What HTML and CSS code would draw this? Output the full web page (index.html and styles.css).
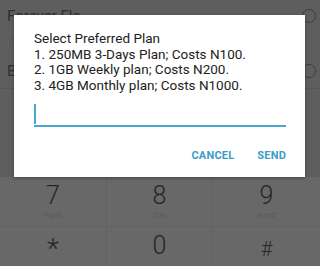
FILE: index.html
```html
<!DOCTYPE html>
<html>
<head>
<meta charset="utf-8">
<link rel="stylesheet" href="styles.css">
</head>
<body>
<div class="screen">
  <div class="top">
    <div class="row r1"><span class="name">Forever Flo</span><span class="ring"></span></div>
    <div class="row r2"><span class="ring small"></span></div>
    <div class="row r3"><span class="name">B</span><span class="ring"></span></div>
  </div>
  <div class="pad">
    <div class="key"><span class="d">7</span><span class="l">PQRS</span></div>
    <div class="key"><span class="d">8</span><span class="l">TUV</span></div>
    <div class="key"><span class="d">9</span><span class="l">WXYZ</span></div>
    <div class="key"><span class="d star">*</span></div>
    <div class="key"><span class="d">0</span></div>
    <div class="key"><span class="d hash">#</span></div>
  </div>
  <div class="dialog">
    <div class="msg">Select Preferred Plan<br>1. 250MB 3-Days Plan; Costs N100.<br>2. 1GB Weekly plan; Costs N200.<br>3. 4GB Monthly plan; Costs N1000.</div>
    <div class="input"><span class="caret"></span></div>
    <div class="actions"><span class="btn">CANCEL</span><span class="btn">SEND</span></div>
  </div>
</div>
</body>
</html>
```
FILE: styles.css
```css
html, body { margin: 0; padding: 0; }
body { width: 320px; height: 266px; overflow: hidden; background: #5d5d5d; font-family: Roboto, "Noto Sans", sans-serif; }
.screen { position: relative; width: 320px; height: 266px; display: flex; flex-direction: column; }
.top { height: 180px; background: #5e5e5e; display: flex; flex-direction: column; }
.row { display: flex; align-items: center; justify-content: space-between; padding: 0 4px 0 7px; }
.r1 { height: 28px; padding-top: 2px; }
.r2 { height: 24px; padding-left: 9px; }
.r3 { height: 34px; border-bottom: 1px solid #575757; }
.name { font-size: 15px; color: #2f2f2f; }
.ring { width: 12px; height: 12px; border: 1.5px solid #3c3c3c; border-radius: 50%; }
.ring.small { width: 7px; height: 7px; border-color: #555; }
.pad { flex: 1; background: #686868; display: grid; grid-template-columns: 107px 106px 107px; grid-template-rows: 50px 1fr; }
.key { display: flex; flex-direction: column; align-items: center; border-right: 1px solid #626262; border-bottom: 1px solid #626262; padding-top: 5px; }
.key:nth-child(3n) { border-right: none; }
.key:nth-child(n+4) { border-bottom: none; }
.d { font-size: 25px; font-weight: 300; color: #262626; line-height: 28px; }
.d.star { font-size: 28px; line-height: 34px; font-weight: 300; }
.d.hash { font-size: 20px; line-height: 34px; }
.l { font-size: 7px; color: #585858; line-height: 9px; margin-top: 2px; letter-spacing: 0.2px; }
.dialog { position: absolute; left: 14px; top: 15px; width: 291px; height: 162px; background: #fff; box-shadow: 0 1px 3px rgba(0,0,0,0.35); box-sizing: border-box; padding: 16px 19px 0 20px; display: flex; flex-direction: column; }
.msg { font-size: 13.5px; line-height: 15.7px; color: #222; }
.input { height: 21px; margin-top: 10px; border-bottom: 2px solid #48a6cf; display: flex; align-items: flex-start; }
.caret { width: 2px; height: 20px; background: #48a6cf; }
.actions { display: flex; justify-content: flex-end; gap: 23px; margin-top: 22px; padding-right: 0px; }
.btn { font-size: 11px; font-weight: bold; color: #3c9ccb; letter-spacing: 0.2px; }
```
